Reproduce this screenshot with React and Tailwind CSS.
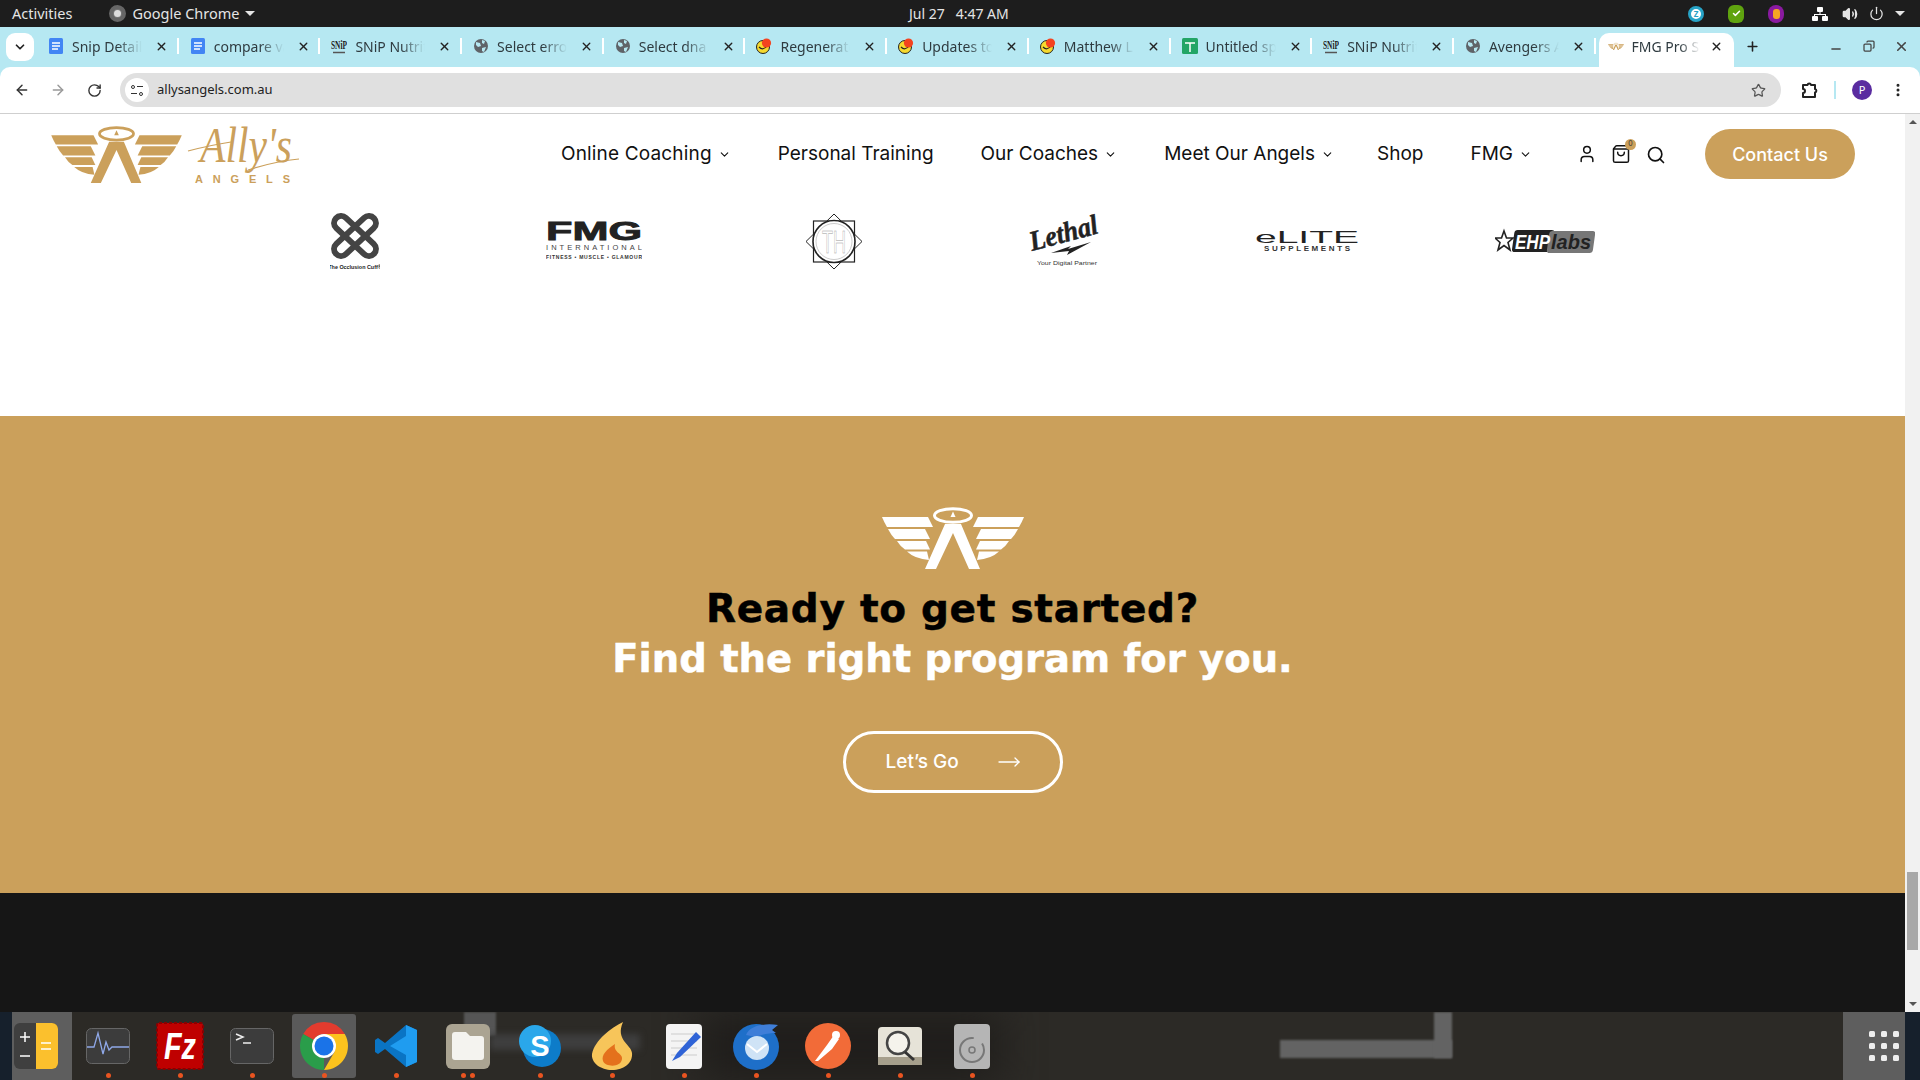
import { ArrowLeft, ArrowRight, RotateCw, Star, EllipsisVertical, ChevronDown, X, Plus, Minus, User, ShoppingBag, Search, MoveRight, Volume2, Power, Copy, Check } from 'lucide-react';

const GOLD = '#cba05b';

function WingLogo({ color, className }) {
  return (
    <svg viewBox="0 0 142 62" className={className} fill={color}>
      <ellipse cx="71" cy="8.5" rx="18.5" ry="6.8" fill="none" stroke={color} strokeWidth="3" />
      <polygon points="71,4.5 73.5,10 68.5,10" />
      {/* left wing */}
      <path d="M0 10H46L51 20H5Q2 15 0 10Z" />
      <path d="M6 22H43L48 32H13Q9 28 6 22Z" />
      <path d="M15 34H44L48 42.5H23Q18 39 15 34Z" />
      <path d="M25 44.5H45L47 53Q33 52 25 44.5Z" />
      {/* right wing */}
      <path d="M142 10H96L91 20H137Q140 15 142 10Z" />
      <path d="M136 22H99L94 32H129Q133 28 136 22Z" />
      <path d="M127 34H98L94 42.5H119Q124 39 127 34Z" />
      <path d="M117 44.5H97L95 53Q109 52 117 44.5Z" />
      {/* the A */}
      <path d="M63 17H79L98 62H87L71 26L54 62H43Z" />
    </svg>
  );
}

function AllysLogo() {
  return (
    <div className="flex items-start gap-[4px]">
      <WingLogo color={GOLD} className="w-[131px] h-[57px]" />
      <svg viewBox="0 0 113 57" className="w-[113px] h-[57px] overflow-visible">
        <path d="M2 25Q25 19 45 16" fill="none" stroke={GOLD} strokeWidth="1.2" />
        <path d="M62 44Q90 35 113 33" fill="none" stroke={GOLD} strokeWidth="1.2" />
        <text x="14" y="36" fontFamily="'Liberation Serif', serif" fontStyle="italic" fontSize="50" fill={GOLD} textLength="92" lengthAdjust="spacingAndGlyphs">Ally's</text>
        <text x="9" y="57" fontFamily="'Liberation Sans', sans-serif" fontWeight="700" fontSize="11" fill={GOLD} textLength="95">ANGELS</text>
      </svg>
    </div>
  );
}

function OcclusionLogo() {
  return (
    <svg viewBox="0 0 50 57" className="w-[50px] h-[57px]">
      <g fill="none" stroke="#444" strokeWidth="6">
        <rect x="-7" y="-26" width="14" height="52" rx="7" transform="translate(25 23) rotate(47)" />
        <rect x="-7" y="-26" width="14" height="52" rx="7" transform="translate(25 23) rotate(-47)" />
      </g>
      <text x="25" y="56" textAnchor="middle" fontFamily="'Liberation Sans', sans-serif" fontSize="5.4" fontWeight="700" fill="#222">The Occlusion Cuff®</text>
    </svg>
  );
}

function FmgLogo() {
  return (
    <svg viewBox="0 0 96 40" className="w-[96px] h-[40px]">
      <text x="0" y="19" fontFamily="'Liberation Sans', sans-serif" fontWeight="700" fontSize="25" fill="#222" stroke="#222" strokeWidth="0.8" textLength="96" lengthAdjust="spacingAndGlyphs">FMG</text>
      <text x="0" y="29" fontFamily="'Liberation Sans', sans-serif" fontSize="7.5" fill="#444" textLength="96">INTERNATIONAL</text>
      <text x="0" y="38" fontFamily="'Liberation Sans', sans-serif" fontWeight="700" fontSize="5" fill="#333" textLength="96">FITNESS • MUSCLE • GLAMOUR</text>
    </svg>
  );
}

function ThLogo() {
  return (
    <svg viewBox="0 0 58 57" className="w-[58px] h-[57px]">
      <polygon points="29,1 57,28.5 29,56 1,28.5" fill="none" stroke="#222" strokeWidth="1" />
      <rect x="8.5" y="8" width="41" height="41" fill="#fff" stroke="#222" strokeWidth="1.2" />
      <circle cx="29" cy="28.5" r="21" fill="#fff" stroke="#222" strokeWidth="1.6" />
      <circle cx="29" cy="28.5" r="18" fill="none" stroke="#aaa" strokeWidth="0.6" />
      <text x="29" y="40" textAnchor="middle" fontFamily="'Liberation Sans', sans-serif" fontSize="31" fill="#fff" stroke="#999" strokeWidth="0.5" textLength="24" lengthAdjust="spacingAndGlyphs">TH</text>
    </svg>
  );
}

function LethalLogo() {
  return (
    <svg viewBox="0 0 71 50" className="w-[71px] h-[50px] overflow-visible">
      <text x="1" y="35" transform="rotate(-15 1 35)" fontFamily="'Liberation Serif', serif" fontWeight="700" fontStyle="italic" fontSize="28" fill="#222" stroke="#222" strokeWidth="0.5" textLength="70" lengthAdjust="spacingAndGlyphs">Lethal</text>
      <polygon points="20,37 40,30 37,33 60,26 36,39 38,35" fill="#222" />
      <text x="36" y="49" textAnchor="middle" fontFamily="'Liberation Sans', sans-serif" fontSize="6.2" fill="#333" textLength="60" lengthAdjust="spacingAndGlyphs">Your Digital Partner</text>
    </svg>
  );
}

function EliteLogo() {
  return (
    <svg viewBox="0 0 104 20" className="w-[104px] h-[20px]">
      <text x="0" y="11.5" fontFamily="'Liberation Sans', sans-serif" fontSize="16" fill="#222" textLength="104" lengthAdjust="spacingAndGlyphs">eLITE</text>
      <text x="9" y="20" fontFamily="'Liberation Sans', sans-serif" fontWeight="700" fontSize="8" fill="#333" textLength="86">SUPPLEMENTS</text>
    </svg>
  );
}

function EhpLogo() {
  return (
    <svg viewBox="0 0 100 26" className="w-[100px] h-[26px]">
      <polygon points="9,3 11.5,10 18,10 13,14.5 15,22 9,17.5 3,22 5,14.5 0,10 6.5,10" fill="#fff" stroke="#222" strokeWidth="1.6" />
      <rect x="17" y="2" width="40" height="22" rx="3" fill="#222" transform="skewX(-8) translate(3 0)" />
      <rect x="52" y="3" width="46" height="22" rx="3" fill="#777" transform="skewX(-8) translate(3 0)" />
      <text x="20" y="21" fontFamily="'Liberation Sans', sans-serif" fontWeight="700" fontStyle="italic" fontSize="21" fill="#fff" textLength="35" lengthAdjust="spacingAndGlyphs">EHP</text>
      <text x="56" y="21" fontFamily="'Liberation Sans', sans-serif" fontWeight="700" fontStyle="italic" fontSize="21" fill="#222" textLength="40" lengthAdjust="spacingAndGlyphs">labs</text>
    </svg>
  );
}

function Favicon({ kind }) {
  if (kind === 'doc') {
    return (
      <svg viewBox="0 0 16 16" className="w-4 h-4 shrink-0">
        <rect x="1" y="0" width="14" height="16" rx="1.5" fill="#4285f4" />
        <path d="M4 5h8M4 8h8M4 11h6" stroke="#fff" strokeWidth="1.4" />
      </svg>
    );
  }
  if (kind === 'snip') {
    return (
      <svg viewBox="0 0 16 16" className="w-4 h-4 shrink-0">
        <text x="8" y="11" textAnchor="middle" fontFamily="'Liberation Serif', serif" fontWeight="700" fontSize="13" fill="#222" textLength="16" lengthAdjust="spacingAndGlyphs">SNiP</text>
        <path d="M2 14.5h12" stroke="#555" strokeWidth="1.5" />
      </svg>
    );
  }
  if (kind === 'globe') {
    return (
      <svg viewBox="0 0 16 16" className="w-4 h-4 shrink-0">
        <circle cx="8" cy="8" r="7" fill="#5f6368" />
        <path d="M3 4l4 1 1 3-3 1-2-2zM9 2l3 1-1 3-2-1zM9 10l4-1-2 5-2-1z" fill="#b6e8f2" />
      </svg>
    );
  }
  if (kind === 'mail') {
    return (
      <svg viewBox="0 0 16 16" className="w-4 h-4 shrink-0">
        <circle cx="7" cy="9" r="6.5" fill="#f6d92e" stroke="#222" strokeWidth="1" />
        <path d="M3 9q4 4 8-1" fill="none" stroke="#222" strokeWidth="1.2" />
        <circle cx="10.5" cy="5" r="4.6" fill="#f4431f" />
      </svg>
    );
  }
  if (kind === 'sheet') {
    return (
      <svg viewBox="0 0 16 16" className="w-4 h-4 shrink-0">
        <rect width="16" height="16" rx="1.5" fill="#23a566" />
        <path d="M3 5h10M8 5v9" stroke="#fff" strokeWidth="1.5" />
      </svg>
    );
  }
  return <WingLogo color={GOLD} className="w-4 h-[9px] shrink-0" />;
}

const tabs = [
  { title: 'Snip Details', icon: 'doc' },
  { title: 'compare values', icon: 'doc' },
  { title: 'SNiP Nutrition', icon: 'snip' },
  { title: 'Select error', icon: 'globe' },
  { title: 'Select dna', icon: 'globe' },
  { title: 'Regenerate', icon: 'mail' },
  { title: 'Updates to', icon: 'mail' },
  { title: 'Matthew L', icon: 'mail' },
  { title: 'Untitled sp', icon: 'sheet' },
  { title: 'SNiP Nutrition', icon: 'snip' },
  { title: 'Avengers A', icon: 'globe' },
];

function TopBar() {
  return (
    <div className="h-[27px] bg-[#1d1d1d] text-[#e4e4e4] text-[14.5px] flex items-center relative">
      <span className="ml-[12px]">Activities</span>
      <span className="ml-[37px] w-[17px] h-[17px] rounded-full bg-[#777] border-[4px] border-[#666] flex items-center justify-center">
        <span className="w-[7px] h-[7px] rounded-full bg-[#ddd]"></span>
      </span>
      <span className="ml-[6px]">Google Chrome</span>
      <span className="ml-[6px] w-0 h-0 border-x-[5px] border-x-transparent border-t-[5px] border-t-[#e4e4e4]"></span>
      <span className="absolute left-[909px] text-[14px]">Jul 27 &nbsp;&nbsp;4:47 AM</span>
      <div className="ml-auto flex items-center mr-[15px]">
        <span className="w-[16px] h-[16px] rounded-full bg-white border-[3px] border-[#27a3c6] flex items-center justify-center text-[8px] font-bold text-[#27a3c6]">Z</span>
        <span className="ml-[24px] w-[16px] h-[18px] rounded-[6px] bg-[#5fa30f] flex items-center justify-center">
          <Check size={9} color="#fff" strokeWidth={4} />
        </span>
        <span className="ml-[24px] w-[16px] h-[18px] rounded-full bg-[#8a1aa0] flex items-center justify-center">
          <span className="w-[7px] h-[10px] rounded-[3px] bg-[#f5a623]"></span>
        </span>
        <svg viewBox="0 0 16 16" className="ml-[28px] w-4 h-4" fill="#fff">
          <rect x="5" y="1" width="6" height="5" rx="1" />
          <rect x="0" y="10" width="6" height="5" rx="1" />
          <rect x="10" y="10" width="6" height="5" rx="1" />
          <path d="M7.5 6h1v2H14v2h-1V9H3v1H2V8h5.5Z" />
        </svg>
        <Volume2 size={16} color="#e4e4e4" fill="#e4e4e4" className="ml-[14px]" />
        <Power size={15} color="#e4e4e4" className="ml-[11px]" />
        <span className="ml-[11px] w-0 h-0 border-x-[5px] border-x-transparent border-t-[5px] border-t-[#e4e4e4]"></span>
      </div>
    </div>
  );
}

function TabStrip() {
  return (
    <div className="h-[40px] bg-[#b6e8f2] flex items-end text-[14px] text-[#2f3b40]">
      <div className="ml-[6px] mr-[3px] mb-[6px] w-[28px] h-[28px] rounded-[9px] bg-white flex items-center justify-center">
        <ChevronDown size={14} color="#222" strokeWidth={3} />
      </div>
      {tabs.map((tab, i) => (
        <div key={i} className="w-[141.7px] h-[34px] pb-[8px] flex items-center pl-[11px]">
          <Favicon kind={tab.icon} />
          <span className="ml-[8px] w-[70px] overflow-hidden whitespace-nowrap [mask-image:linear-gradient(to_right,black_65%,transparent)]">{tab.title}</span>
          <X size={13} color="#222" strokeWidth={2.5} className="ml-[13px]" />
          <span className="ml-auto w-[2px] h-[16px] bg-white"></span>
        </div>
      ))}
      <div className="ml-[3px] w-[135px] h-[34px] pb-[8px] bg-white rounded-t-[10px] flex items-center pl-[9px]">
        <Favicon kind="wing" />
        <span className="ml-[8px] w-[68px] overflow-hidden whitespace-nowrap [mask-image:linear-gradient(to_right,black_70%,transparent)]">FMG Pro Sessions</span>
        <X size={13} color="#222" strokeWidth={2.5} className="ml-[10px]" />
      </div>
      <div className="h-[34px] pb-[8px] flex items-center ml-[11px]">
        <Plus size={15} color="#222" strokeWidth={2.5} />
      </div>
      <div className="ml-auto h-[34px] pb-[8px] flex items-center mr-[11px]">
        <Minus size={14} color="#444" strokeWidth={2.5} className="mt-[6px]" />
        <Copy size={12} color="#444" strokeWidth={2.5} className="ml-[20px] -scale-x-100" />
        <X size={15} color="#444" strokeWidth={2.5} className="ml-[19px]" />
      </div>
    </div>
  );
}

function Toolbar() {
  return (
    <div className="bg-[#b6e8f2]">
      <div className="h-[47px] bg-white rounded-t-[10px] border-b border-[#cfcfcf] flex items-center">
        <ArrowLeft size={16} color="#333" strokeWidth={2.2} className="ml-[14px]" />
        <ArrowRight size={16} color="#999" strokeWidth={2.2} className="ml-[20px]" />
        <RotateCw size={15} color="#333" strokeWidth={2.2} className="ml-[21px]" />
        <div className="ml-[18px] w-[1661px] h-[34px] rounded-full bg-[#e0e0e0] flex items-center text-[13px] text-[#222]">
          <span className="ml-[5px] w-[24px] h-[24px] rounded-full bg-white flex flex-col items-center justify-center gap-[3px]">
            <span className="flex items-center gap-[2px]"><span className="w-[4px] h-[4px] rounded-full border border-[#333]"></span><span className="w-[6px] h-[1px] bg-[#333]"></span></span>
            <span className="flex items-center gap-[2px]"><span className="w-[6px] h-[1px] bg-[#333]"></span><span className="w-[4px] h-[4px] rounded-full border border-[#333]"></span></span>
          </span>
          <span className="ml-[8px]">allysangels.com.au</span>
          <Star size={15} color="#555" strokeWidth={2} className="ml-auto mr-[15px]" />
        </div>
        <svg viewBox="0 0 18 18" className="ml-[19px] w-[18px] h-[18px]" fill="none" stroke="#222" strokeWidth="2" strokeLinejoin="round">
          <path d="M3 4H7.5A1.8 1.8 0 0 1 11 4H15V8A1.8 1.8 0 0 1 15 11.5V16H3V12A1.8 1.8 0 0 0 3 8Z" />
        </svg>
        <span className="ml-[16px] w-[2px] h-[18px] bg-[#b6e8f2]"></span>
        <span className="ml-[16px] w-[20px] h-[20px] rounded-full bg-[#5a2ca0] text-white text-[11px] flex items-center justify-center">P</span>
        <EllipsisVertical size={16} color="#222" strokeWidth={2.5} className="ml-[18px]" />
      </div>
    </div>
  );
}

function NavItem({ label, caret, className = '' }) {
  return (
    <span className={`flex items-center ${className}`}>
      {label}
      {caret && <ChevronDown size={13} strokeWidth={2} className="ml-[6px]" />}
    </span>
  );
}

function Site() {
  return (
    <div className="flex-1 min-w-0 flex flex-col bg-white">
      <header className="h-[80px] flex items-center pl-[51px] pr-[50px] font-['Inter',sans-serif]">
        <AllysLogo />
        <nav className="ml-auto flex items-center gap-[47px] text-[19px] text-[#111]">
          <NavItem label="Online Coaching" caret className="tracking-[0.16px]" />
          <NavItem label="Personal Training" />
          <NavItem label="Our Coaches" caret />
          <NavItem label="Meet Our Angels" caret className="mr-[-4px]" />
          <NavItem label="Shop" />
          <NavItem label="FMG" caret />
        </nav>
        <div className="ml-[45px] flex items-center text-[#111]">
          <User size={20} strokeWidth={1.8} />
          <span className="relative ml-[14px]">
            <ShoppingBag size={20} strokeWidth={1.8} />
            <span className="absolute -top-[5px] -right-[5px] w-[11px] h-[11px] rounded-full bg-[#cba05b] text-[7px] text-[#333] flex items-center justify-center">0</span>
          </span>
          <Search size={20} strokeWidth={2} className="ml-[15px] mt-[2px]" />
        </div>
        <button className="ml-[39px] w-[150px] h-[50px] rounded-full bg-[#cba05b] text-white text-[18px] font-medium">Contact Us</button>
      </header>

      <div className="h-[222px]">
        <div className="h-[94px] ml-[236px] flex items-center">
          <div className="w-[238px] flex justify-center"><OcclusionLogo /></div>
          <div className="w-[240px] flex justify-center"><FmgLogo /></div>
          <div className="w-[240px] flex justify-center"><ThLogo /></div>
          <div className="w-[225px] flex justify-center"><LethalLogo /></div>
          <div className="w-[256px] flex justify-center"><EliteLogo /></div>
          <div className="w-[220px] flex justify-center"><EhpLogo /></div>
        </div>
      </div>

      <section className="h-[477px] bg-[#cba05b] flex flex-col items-center pt-[91px]">
        <WingLogo color="#fff" className="w-[142px] h-[62px]" />
        <h2 className="mt-[15px] leading-[50px] font-bold text-center text-black font-['DejaVu_Sans',sans-serif] [-webkit-text-stroke:0.5px]">
          <span className="block text-[39px] tracking-[0.7px]">Ready to get started?</span>
          <span className="block text-[38.5px] text-white">Find the right program for you.</span>
        </h2>
        <button className="mt-[47px] w-[220px] h-[62px] rounded-full border-[3px] border-white text-white text-[19px] font-medium flex items-center pl-[40px] font-['Inter',sans-serif]">
          Let’s Go
          <MoveRight size={24} strokeWidth={1.3} className="ml-[38px]" />
        </button>
      </section>

      <div className="flex-1 bg-[#161616]"></div>
    </div>
  );
}

function Scrollbar() {
  return (
    <div className="w-[15px] bg-[#f1f1f1] relative shrink-0">
      <span className="absolute top-[6px] left-[4px] w-0 h-0 border-x-[4px] border-x-transparent border-b-[4px] border-b-[#555]"></span>
      <span className="absolute top-[758px] left-[2px] w-[11px] h-[78px] bg-[#a8a8a8]"></span>
      <span className="absolute bottom-[6px] left-[4px] w-0 h-0 border-x-[4px] border-x-transparent border-t-[4px] border-t-[#555]"></span>
    </div>
  );
}

function DockIcon({ children, active, dots = 1 }) {
  return (
    <div className="w-[72px] h-full flex flex-col items-center relative shrink-0">
      {active && <span className="absolute top-[2px] left-[4px] w-[64px] h-[64px] rounded-[3px] bg-[#5a5a5a]"></span>}
      <div className="relative h-[62px] flex items-center justify-center pt-[6px]">{children}</div>
      {dots > 0 && (
        <div className="relative flex gap-[4px] mt-[-1px]">
          {Array.from({ length: dots }).map((_, i) => (
            <span key={i} className="w-[5px] h-[5px] rounded-full bg-[#e95420]"></span>
          ))}
        </div>
      )}
    </div>
  );
}

function Dock() {
  return (
    <div className="h-[68px] bg-[#2c2a26] relative overflow-hidden flex">
      <span className="absolute left-[464px] top-0 w-[32px] h-[24px] bg-[#555] blur-[1px]"></span>
      <span className="absolute left-[490px] top-[22px] w-[150px] h-[16px] bg-[#3e3e3e] blur-[3px]"></span>
      <span className="absolute left-[1280px] top-[28px] w-[172px] h-[18px] bg-[#636363] blur-[1px]"></span>
      <span className="absolute left-[1434px] top-0 w-[18px] h-[46px] bg-[#636363] blur-[1px]"></span>
      <span className="absolute left-[700px] top-0 w-[300px] h-[68px] bg-[#1f1d1b] blur-[20px]"></span>

      <span className="w-[12px] bg-[#16202c] relative"></span>
      <div className="w-[60px] bg-[#5e5e5e] relative flex items-center pl-[2px]">
        <svg viewBox="0 0 44 46" className="w-[44px] h-[46px]">
          <rect width="44" height="46" rx="6" fill="#3f3f3f" />
          <path d="M22 0H38a6 6 0 0 1 6 6V40a6 6 0 0 1-6 6H22Z" fill="#fbc02d" />
          <path d="M6 14h10M11 9v10M6 33h10M27 20h10M27 26h10" stroke="#fff" strokeWidth="1.5" />
        </svg>
      </div>

      <DockIcon>
        <svg viewBox="0 0 44 36" className="w-[44px] h-[36px]">
          <rect x="0.5" y="0.5" width="43" height="35" rx="5" fill="#3c3c3c" stroke="#666" />
          <path d="M1 19H8L12 5L17 26L20 14L23 22L26 19H43" fill="none" stroke="#8fa8e8" strokeWidth="1.3" />
        </svg>
      </DockIcon>
      <DockIcon>
        <svg viewBox="0 0 48 48" className="w-[48px] h-[48px]">
          <rect x="1" y="1" width="46" height="46" fill="#bf0000" stroke="#8a0000" strokeWidth="2" strokeDasharray="3 2" rx="2" />
          <text x="24" y="37" textAnchor="middle" fontFamily="'Liberation Sans', sans-serif" fontWeight="700" fontStyle="italic" fontSize="36" fill="#fff" textLength="32" lengthAdjust="spacingAndGlyphs">Fz</text>
        </svg>
      </DockIcon>
      <DockIcon>
        <svg viewBox="0 0 44 36" className="w-[44px] h-[36px]">
          <rect x="0.5" y="0.5" width="43" height="35" rx="5" fill="#3c3c3c" stroke="#666" />
          <path d="M6 6l7 3-7 3M13 15h8" fill="none" stroke="#eee" strokeWidth="1.5" />
        </svg>
      </DockIcon>
      <DockIcon active>
        <svg viewBox="0 0 48 48" className="w-[48px] h-[48px]">
          <path d="M24 0A24 24 0 0 1 44.78 12H24a12 12 0 0 0-10.39 6L3.22 12A24 24 0 0 1 24 0Z" fill="#e33b2e" />
          <path d="M3.22 12L13.61 18V30L24 36L24 48A24 24 0 0 1 3.22 12Z" fill="#2a9d4a" />
          <path d="M44.78 12A24 24 0 0 1 24 48L34.39 30V18L24 12Z" fill="#fcc31e" />
          <circle cx="24" cy="24" r="12" fill="#fff" />
          <circle cx="24" cy="24" r="9.5" fill="#1a73e8" />
        </svg>
      </DockIcon>
      <DockIcon>
        <svg viewBox="0 0 42 42" className="w-[42px] h-[42px]">
          <path d="M31 0L42 5V37L31 42L10 24L3 29L0 27V15L3 13L10 18Z" fill="#0a74c4" />
          <path d="M31 0L42 5V37L31 42V30L15 21L31 11Z" fill="#1f9cf0" />
        </svg>
      </DockIcon>
      <DockIcon dots={2}>
        <svg viewBox="0 0 44 45" className="w-[44px] h-[45px]">
          <rect width="44" height="45" rx="6" fill="#aba492" />
          <path d="M6 11a3 3 0 0 1 3-3H20L24 12H35a3 3 0 0 1 3 3V33a3 3 0 0 1-3 3H9a3 3 0 0 1-3-3Z" fill="#f4f3ef" />
        </svg>
      </DockIcon>
      <DockIcon>
        <svg viewBox="0 0 42 42" className="w-[42px] h-[42px]">
          <circle cx="23" cy="23" r="19" fill="#0d7cc9" />
          <circle cx="16" cy="16" r="16" fill="#2aa7ea" />
          <text x="21" y="31" textAnchor="middle" fontFamily="'Liberation Sans', sans-serif" fontWeight="700" fontSize="29" fill="#fff">S</text>
        </svg>
      </DockIcon>
      <DockIcon>
        <svg viewBox="0 0 42 48" className="w-[42px] h-[48px]">
          <path d="M32 0C20 6 4 18 1 32C0 41 10 48 21 48C33 48 42 41 41 31C40 22 24 18 32 0Z" fill="#f7c55a" />
          <path d="M24 22C16 27 10 33 12 39C14 45 30 46 31 37C32 31 22 31 24 22Z" fill="#e4711c" />
        </svg>
      </DockIcon>
      <DockIcon>
        <svg viewBox="0 0 36 45" className="w-[36px] h-[45px]">
          <rect width="36" height="45" rx="4" fill="#f4f4f4" />
          <path d="M5 10h26M5 17h26M5 24h26M5 31h26" stroke="#ccc" strokeWidth="1" />
          <path d="M30 8L11 29L6 37L14 33L35 13Z" fill="#2f63d6" />
        </svg>
      </DockIcon>
      <DockIcon>
        <svg viewBox="0 0 48 47" className="w-[48px] h-[47px]">
          <circle cx="24" cy="24" r="23" fill="#1e6fc9" />
          <path d="M14 12C18 2 34 0 46 2L40 7L44 10C38 10 30 11 24 14Z" fill="#3f7ed8" />
          <circle cx="25" cy="25" r="12" fill="#cfe3f6" />
          <path d="M15 21L25 29L35 21" fill="none" stroke="#fff" strokeWidth="2" />
        </svg>
      </DockIcon>
      <DockIcon>
        <svg viewBox="0 0 46 46" className="w-[46px] h-[46px]">
          <circle cx="23" cy="23" r="23" fill="#f26b38" />
          <path d="M10 38L22 22L29 12L34 16L27 26L13 38Z" fill="#fff" />
          <circle cx="31" cy="12" r="4" fill="#fff" />
        </svg>
      </DockIcon>
      <DockIcon>
        <svg viewBox="0 0 44 38" className="w-[44px] h-[38px]">
          <rect width="44" height="38" rx="4" fill="#e6e3d8" />
          <rect y="30" width="44" height="8" fill="#a69f8c" />
          <circle cx="20" cy="16" r="11" fill="#f5f3ec" stroke="#444" strokeWidth="2.5" />
          <path d="M27 25l9 8" stroke="#333" strokeWidth="3" />
        </svg>
      </DockIcon>
      <DockIcon>
        <svg viewBox="0 0 36 45" className="w-[36px] h-[45px]">
          <rect width="36" height="45" rx="4" fill="#b5b5b5" />
          <circle cx="18" cy="26" r="12" fill="none" stroke="#777" strokeWidth="2" strokeDasharray="58 10" />
          <circle cx="18" cy="26" r="3" fill="none" stroke="#777" strokeWidth="1.5" />
        </svg>
      </DockIcon>

      <div className="absolute right-[15px] top-0 w-[62px] h-[68px] bg-[#5e5e5e]">
        <div className="ml-[26px] mt-[19px] grid grid-cols-3 gap-[6px] w-[30px]">
          {Array.from({ length: 9 }).map((_, i) => (
            <span key={i} className="w-[6px] h-[6px] rounded-[1.5px] bg-[#eee]"></span>
          ))}
        </div>
      </div>
      <span className="absolute right-0 top-0 w-[15px] h-[68px] bg-[#16202c]"></span>
    </div>
  );
}

export default function App() {
  return (
    <div className="w-[1920px] h-[1080px] overflow-hidden flex flex-col font-['Noto_Sans',sans-serif]">
      <TopBar />
      <TabStrip />
      <Toolbar />
      <div className="flex-1 min-h-0 flex">
        <Site />
        <Scrollbar />
      </div>
      <Dock />
    </div>
  );
}
